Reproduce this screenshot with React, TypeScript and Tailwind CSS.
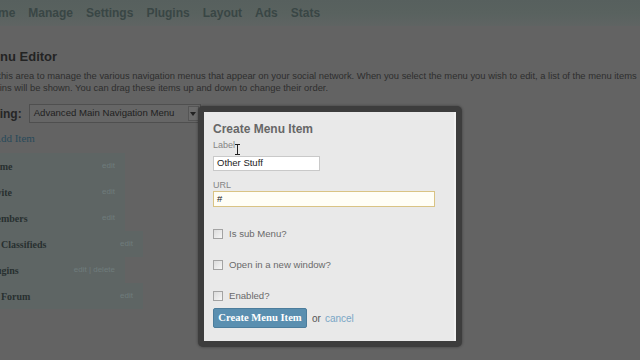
const sans = { fontFamily: '"Liberation Sans", Arial, sans-serif' };
const serif = { fontFamily: '"Liberation Serif", Georgia, serif' };

const navItems = ["Home", "Manage", "Settings", "Plugins", "Layout", "Ads", "Stats"];

const menuRows = [
  { label: "Home", sub: false, actions: "edit" },
  { label: "Invite", sub: false, actions: "edit" },
  { label: "Members", sub: false, actions: "edit" },
  { label: "My Classifieds", sub: true, actions: "edit" },
  { label: "Plugins", sub: false, actions: "edit | delete" },
  { label: "My Forum", sub: true, actions: "edit" },
];

function Checkbox() {
  return (
    <span className="inline-block h-[10px] w-[10px] shrink-0 border border-[#a3a3a3] bg-gradient-to-br from-[#dcdcdc] to-[#f6f6f6]" />
  );
}

function CheckRow({ label, className }: { label: string; className?: string }) {
  return (
    <div className={"flex h-[13px] items-center gap-[6px] " + (className ?? "")}>
      <Checkbox />
      <span className="text-[9.6px] leading-[13px] text-[#6a6a6a]">{label}</span>
    </div>
  );
}

export default function App() {
  return (
    <div className="relative h-[360px] w-[640px] overflow-hidden bg-[#636363]" style={sans}>
      {/* top nav */}
      <div className="h-[26px] bg-gradient-to-b from-[#57605e] via-[#59625f] to-[#5f6463]">
        <div className="-ml-[18px] flex h-[26px] items-center gap-[13px] whitespace-nowrap text-[12px] font-bold text-[#394645]">
          {navItems.map((n) => (
            <span key={n}>{n}</span>
          ))}
        </div>
      </div>

      {/* page body under overlay */}
      <div className="whitespace-nowrap">
        <h1 className="-ml-[18px] mt-[23px] text-[13px] font-bold leading-[16px] text-[#232323]">
          Menu Editor
        </h1>
        <div className="-ml-[21px] mt-[5px] text-[9.4px] leading-[12px] text-[#2e2e2e]">
          <div>
            Use this area to manage the various navigation menus that appear on your social network. When you
            select the menu you wish to edit, a list of the menu items
          </div>
          <div className="ml-[3px]">plugins will be shown. You can drag these items up and down to change their order.</div>
        </div>

        <div className="-ml-[23px] mt-[10px] flex items-center gap-[7px]">
          <span className="text-[12px] font-bold text-[#262626]">Editing:</span>
          <div className="flex h-[19px] w-[172px] items-center justify-between border border-[#4f4f4f] bg-[#666666] pl-[4px] pr-[1px]">
            <span className="text-[9.6px] text-[#1f1f1f]">Advanced Main Navigation Menu</span>
            <span className="flex h-[15px] w-[11px] items-center justify-center border border-[#555] bg-[#6b6b6b]">
              <svg width="6" height="4" viewBox="0 0 6 4">
                <path d="M0 0h6L3 4z" fill="#222" />
              </svg>
            </span>
          </div>
        </div>

        <div className="-ml-[7px] mt-[9px] text-[11px] leading-[12px] text-[#294a5a]" style={serif}>
          Add Item
        </div>

        <div className="mt-[9px] flex flex-col">
          {menuRows.map((r) => (
            <div
              key={r.label}
              className={
                "flex h-[26px] items-center justify-between bg-[#5e6564] pr-[10px] " +
                (r.sub ? "-ml-[16px] w-[159px]" : "-ml-[13px] w-[138px]")
              }
            >
              <span className="text-[10px] font-bold text-[#283030]" style={serif}>
                {r.label}
              </span>
              <span className="text-[8px] text-[#6f7c7c]">{r.actions}</span>
            </div>
          ))}
        </div>
      </div>

      {/* modal */}
      <div className="absolute left-[198px] top-[106px] w-[264px] rounded-[5px] bg-[#3d3d3d] p-[6px] shadow-[0_0_3px_rgba(0,0,0,0.4)]">
        <div className="relative h-[229px] border-r-2 border-[#f2f2f2] bg-[#e9e9e9] pl-[9px] pt-[10px]">
          <div className="text-[12px] font-bold leading-[14px] text-[#676767]">Create Menu Item</div>

          <div className="mt-[4px] text-[9px] leading-[11px] text-[#858585]">Label</div>
          <div className="mt-[5px] flex h-[15px] w-[107px] items-center border border-[#c9c9c9] bg-white px-[3px] text-[9.5px] text-[#222]">
            Other Stuff
          </div>

          <div className="mt-[9px] text-[9px] leading-[11px] text-[#858585]">URL</div>
          <div className="flex h-[16px] w-[222px] items-center border border-[#d9c384] bg-[#fffef6] px-[3px] text-[9.5px] text-[#222]">
            #
          </div>

          <CheckRow label="Is sub Menu?" className="mt-[20px]" />
          <CheckRow label="Open in a new window?" className="mt-[18px]" />
          <CheckRow label="Enabled?" className="mt-[18px]" />

          <div className="mt-[6px] flex items-center gap-[5px]">
            <button
              className="h-[20px] w-[94px] rounded-[2px] border border-[#4c7d9c] bg-[#5a8fb0] text-[10.6px] font-bold text-white"
              style={serif}
            >
              Create Menu Item
            </button>
            <span className="text-[10px] text-[#555]">or</span>
            <span className="-ml-[1px] text-[10px] text-[#7aa6c6]">cancel</span>
          </div>

          {/* text cursor */}
          <svg className="absolute left-[31px] top-[32px]" width="5" height="11" viewBox="0 0 5 11">
            <path d="M0 0.5h5M0 10.5h5M2.5 0.5v10" stroke="#222" strokeWidth="1" fill="none" />
          </svg>
        </div>
      </div>
    </div>
  );
}
